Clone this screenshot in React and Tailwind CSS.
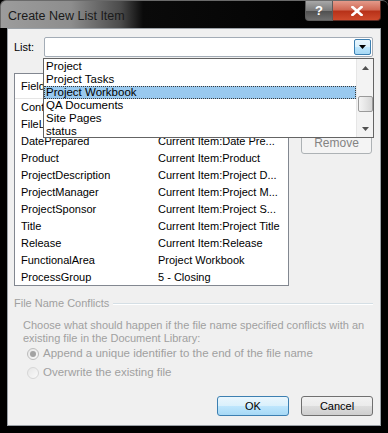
import React from "react";

const font = { fontFamily: '"Liberation Sans", Arial, sans-serif' };

function Tri({ up, className }) {
  return (
    <svg width="7" height="4" viewBox="0 0 7 4" className={className}>
      {up ? <path d="M0 4 L3.5 0 L7 4 Z" fill="currentColor" /> : <path d="M0 0 L7 0 L3.5 4 Z" fill="currentColor" />}
    </svg>
  );
}

const rows = [
  ["ContentType", "Project Workbook"],
  ["FileLeafRef", "Current Item:Name"],
  ["DatePrepared", "Current Item:Date Pre..."],
  ["Product", "Current Item:Product"],
  ["ProjectDescription", "Current Item:Project D..."],
  ["ProjectManager", "Current Item:Project M..."],
  ["ProjectSponsor", "Current Item:Project S..."],
  ["Title", "Current Item:Project Title"],
  ["Release", "Current Item:Release"],
  ["FunctionalArea", "Project Workbook"],
  ["ProcessGroup", "5 - Closing"],
];

const items = ["Project", "Project Tasks", "Project Workbook", "QA Documents", "Site Pages", "status"];

export default function App() {
  return (
    <div
      className="w-[388px] h-[433px] bg-black overflow-hidden flex flex-col text-[11px] text-black leading-none"
      style={font}
    >
      {/* Title bar */}
      <div className="h-[28px] flex items-start rounded-t-[6px] border-t border-l border-[#6a6a6a] bg-[linear-gradient(to_right,#9c9c9c_0px,#8d8d8d_70px,#4a4a4a_120px,#0a0a0a_142px,#000_100%)]">
        <div className="pl-[7px] pt-[7px] text-[12.5px] text-[#1a1a1a] leading-[16px] whitespace-nowrap">Create New List Item</div>
        <div className="ml-auto mr-[7px] flex">
          <div className="w-[28px] h-[20px] rounded-bl-[4px] border border-t-0 border-[#5c5c5c] bg-[linear-gradient(to_bottom,#a8a8a8,#7c7c7c_50%,#4e4e4e_51%,#6f6f6f)] flex items-center justify-center text-white font-bold text-[13px]">
            ?
          </div>
          <div className="w-[48px] h-[20px] rounded-br-[4px] border border-t-0 border-l-0 border-[#5c2a22] bg-[linear-gradient(to_bottom,#e49a8a,#d06a56_45%,#b83219_55%,#cf4a2c)] flex items-center justify-center">
            <svg width="12" height="10" viewBox="0 0 12 10">
              <path d="M1.5 1 L10.5 9 M10.5 1 L1.5 9" stroke="white" strokeWidth="2.6" strokeLinecap="square" />
            </svg>
          </div>
        </div>
      </div>

      {/* Client */}
      <div className="relative mx-[7px] h-[398px] bg-[#f0f0f0] border border-[#9aa0a6] pl-[6px] pr-[7px] pt-[8px]">
        {/* List row */}
        <div className="flex items-center h-[20px]">
          <div className="w-[30px] shrink-0">List:</div>
          <div className="relative flex-1 h-[20px] bg-white border border-[#a3acb6] rounded-[2px]">
            <div className="absolute right-[1px] top-[1px] w-[17px] h-[16px] border border-[#3c7fb1] rounded-[2px] bg-[linear-gradient(to_bottom,#eaf6fd,#d9f0fc_50%,#bee6fd_51%,#a7d9f5)] flex items-center justify-center">
              <Tri className="text-black" />
            </div>
          </div>
        </div>

        {/* Body: listview + buttons */}
        <div className="flex mt-[16px]">
          <div className="w-[275px] shrink-0 h-[213px] bg-white border border-[#828790] flex flex-col overflow-hidden">
            <div className="h-[25px] shrink-0 flex border-b border-[#e5e5e5] bg-white">
              <div className="w-[136px] shrink-0 pl-[6px] flex items-center border-r border-[#e5e5e5]">Field Name</div>
              <div className="flex-1 pl-[6px] flex items-center">Value</div>
            </div>
            {rows.map(([a, b]) => (
              <div key={a} className="h-[17px] shrink-0 flex items-center">
                <div className="w-[137px] shrink-0 pl-[6px] whitespace-nowrap overflow-hidden">{a}</div>
                <div className="flex-1 min-w-0 pl-[6px] whitespace-nowrap overflow-hidden">{b}</div>
              </div>
            ))}
          </div>
          <div className="ml-[12px] w-[71px] shrink-0 flex flex-col gap-[6px]">
            <div className="h-[23px] border border-[#707070] rounded-[3px] bg-[#ececec] flex items-center justify-center">Add...</div>
            <div className="h-[23px] border border-[#707070] rounded-[3px] bg-[#ececec] flex items-center justify-center">Modify...</div>
            <div className="h-[23px] border border-[#adb2b5] rounded-[3px] bg-[#f4f4f4] flex items-end justify-center pb-[4px] text-[#838383] text-[12px]">Remove</div>
          </div>
        </div>

        {/* Group box */}
        <div className="mt-[10px] flex items-center h-[15px] text-[#a0a0a0]">
          <span className="pr-[4px] whitespace-nowrap">File Name Conflicts</span>
          <div className="flex-1 h-[2px] border-t border-[#d5dfe5] border-b border-b-white"></div>
        </div>
        <div className="pl-[9px] pt-[8px] text-[#a0a0a0] leading-[13px] whitespace-nowrap">
          Choose what should happen if the file name specified conflicts with an
          <br />
          existing file in the Document Library:
        </div>
        <div className="pl-[13px] mt-[3px] flex flex-col gap-[7px] text-[#a0a0a0] text-[11.5px]">
          <div className="flex items-center h-[12px]">
            <div className="w-[12px] h-[12px] shrink-0 rounded-full border border-[#bcbcbc] bg-[linear-gradient(135deg,#e6e6e6,#fafafa)] flex items-center justify-center">
              <div className="w-[6px] h-[6px] rounded-full bg-[#a3a3a3]"></div>
            </div>
            <span className="ml-[4px] whitespace-nowrap">Append a unique identifier to the end of the file name</span>
          </div>
          <div className="flex items-center h-[12px]">
            <div className="w-[12px] h-[12px] shrink-0 rounded-full border border-[#d6d6d6] bg-[linear-gradient(135deg,#e6e6e6,#fafafa)]"></div>
            <span className="ml-[4px] whitespace-nowrap">Overwrite the existing file</span>
          </div>
        </div>

        {/* Buttons */}
        <div className="absolute bottom-[9px] right-[7px] flex gap-[12px]">
          <div className="w-[72px] h-[20px] border border-[#3c7fb1] rounded-[3px] bg-[linear-gradient(to_bottom,#eaf6fd,#d9f0fc_50%,#bee6fd_51%,#a7d9f5)] flex items-center justify-center">OK</div>
          <div className="w-[72px] h-[20px] border border-[#707070] rounded-[3px] bg-[linear-gradient(to_bottom,#f2f2f2,#ebebeb_50%,#dddddd_51%,#cfcfcf)] flex items-center justify-center">Cancel</div>
        </div>

        {/* Dropdown overlay */}
        <div className="absolute left-[35px] top-[29px] w-[331px] h-[80px] bg-white border border-[#646464] flex z-10 text-[11.5px]">
          <div className="flex-1 flex flex-col pt-[1px]">
            {items.map((it) => (
              <div
                key={it}
                className={
                  it === "Project Workbook"
                    ? "h-[13px] leading-[13px] pl-[1px] bg-[#99c9ef] border border-dotted border-[#3a3a3a] flex items-center whitespace-nowrap"
                    : "h-[13px] leading-[13px] pl-[2px] flex items-center whitespace-nowrap"
                }
              >
                {it}
              </div>
            ))}
          </div>
          <div className="w-[17px] bg-[#f3f3f3] border-l border-[#e6e6e6] flex flex-col items-center">
            <div className="h-[17px] flex items-center justify-center text-[#505050]">
              <Tri up />
            </div>
            <div className="mt-[20px] w-[15px] h-[16px] border border-[#9a9a9a] rounded-[2px] bg-[linear-gradient(to_right,#f4f4f4,#e6e6e6_50%,#d6d6d6)]"></div>
            <div className="mt-auto h-[17px] flex items-center justify-center text-[#505050]">
              <Tri />
            </div>
          </div>
        </div>
      </div>
    </div>
  );
}
